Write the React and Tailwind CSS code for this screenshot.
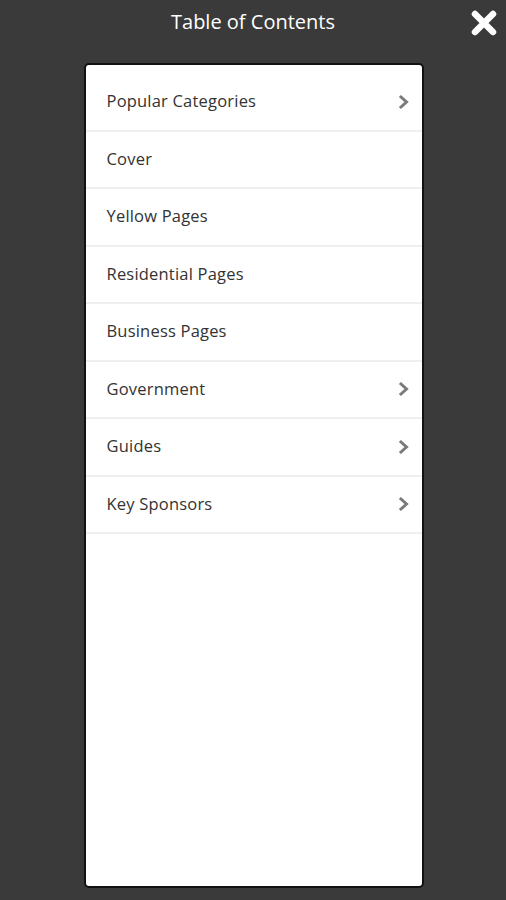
import React from "react";

const items = [
  { label: "Popular Categories", arrow: true },
  { label: "Cover" },
  { label: "Yellow Pages" },
  { label: "Residential Pages" },
  { label: "Business Pages" },
  { label: "Government", arrow: true },
  { label: "Guides", arrow: true },
  { label: "Key Sponsors", arrow: true },
];

function Chevron() {
  return (
    <svg width="12" height="16" viewBox="0 0 12 16" className="shrink-0">
      <path d="M3 3 L8.5 8 L3 13" fill="none" stroke="#7a7a7a" strokeWidth="3" strokeLinecap="square" strokeLinejoin="miter" />
    </svg>
  );
}

export default function App() {
  return (
    <div className="w-[506px] h-[900px] bg-[#3a3a3a] flex flex-col items-center overflow-hidden" style={{ fontFamily: '"Open Sans", "Noto Sans", sans-serif' }}>
      <div className="relative w-full h-[63px] flex justify-center">
        <div className="text-white text-[20px] leading-none mt-[12px]">Table of Contents</div>
        <svg className="absolute right-[9px] top-[10px]" width="26" height="26" viewBox="0 0 26 26">
          <path d="M4 4 L22 22 M22 4 L4 22" stroke="#ffffff" strokeWidth="6.5" strokeLinecap="round" />
        </svg>
      </div>
      <div className="w-[340px] h-[825px] ml-[1px] bg-white rounded-[5px] border-[2px] border-[#111] pt-[9px] flex flex-col">
        {items.map((it) => (
          <div key={it.label} className="h-[57.5px] flex items-center justify-between pl-[21px] pr-[12px] border-b-[2px] border-[#efefef]">
            <span className="text-[#333] text-[16.5px] tracking-[0.2px]">{it.label}</span>
            {it.arrow && <Chevron />}
          </div>
        ))}
      </div>
    </div>
  );
}
